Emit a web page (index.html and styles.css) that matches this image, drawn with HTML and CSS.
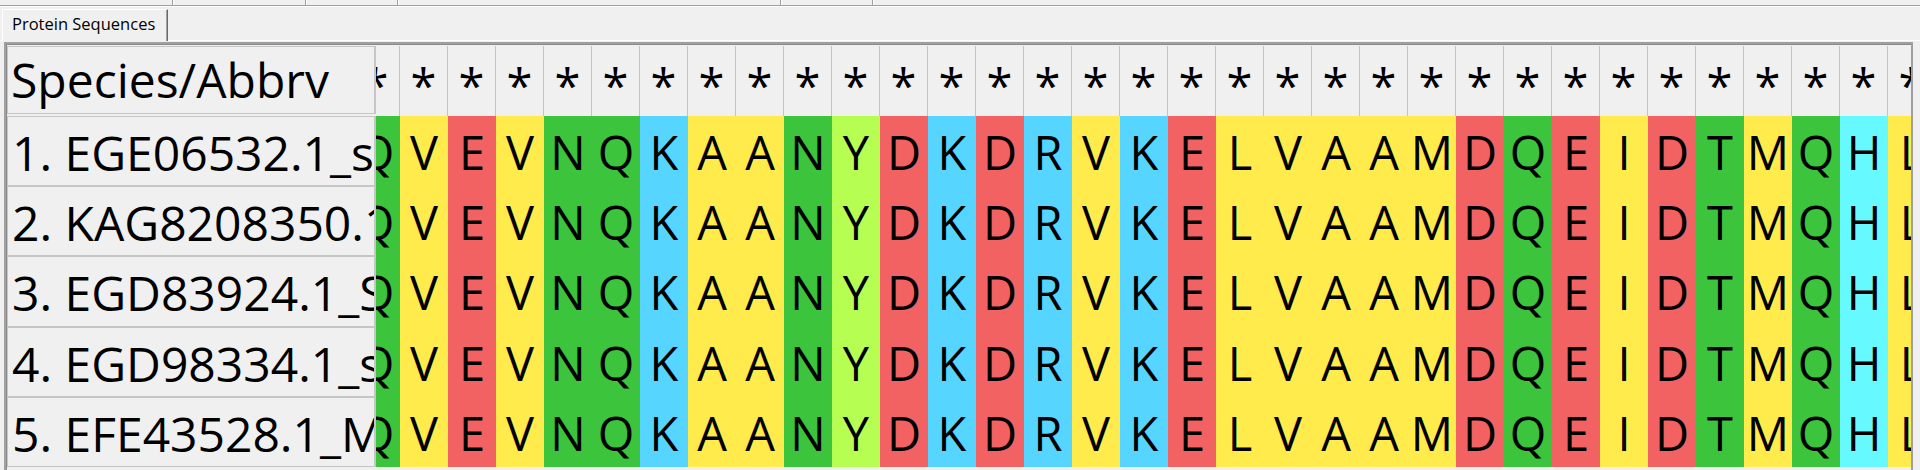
FILE: index.html
```html
<!DOCTYPE html>
<html>
<head>
<meta charset="utf-8">
<link rel="stylesheet" href="styles.css">
</head>
<body>
<div class="topbar">
  <div class="seg w1"></div>
  <div class="seg w2"></div>
  <div class="seg w3"></div>
  <div class="seg w4"></div>
  <div class="seg w5"></div>
  <div class="seg rest"></div>
</div>
<div class="tabs">
  <div class="tab">Protein Sequences</div>
</div>
<div class="panel">
  <div class="frame">
    <div class="names">
      <div class="name head">Species/Abbrv</div>
      <div class="name">1. EGE06532.1_s</div>
      <div class="name">2. KAG8208350.1</div>
      <div class="name">3. EGD83924.1_S</div>
      <div class="name">4. EGD98334.1_s</div>
      <div class="name">5. EFE43528.1_M</div>
    </div>
    <div class="seqs">
      <div class="track">
        <div class="srow head"><span>*</span><span>*</span><span>*</span><span>*</span><span>*</span><span>*</span><span>*</span><span>*</span><span>*</span><span>*</span><span>*</span><span>*</span><span>*</span><span>*</span><span>*</span><span>*</span><span>*</span><span>*</span><span>*</span><span>*</span><span>*</span><span>*</span><span>*</span><span>*</span><span>*</span><span>*</span><span>*</span><span>*</span><span>*</span><span>*</span><span>*</span><span>*</span><span>*</span></div>
        <div class="srow"><span class="g">Q</span><span class="y">V</span><span class="r">E</span><span class="y">V</span><span class="g">N</span><span class="g">Q</span><span class="b">K</span><span class="y">A</span><span class="y">A</span><span class="g">N</span><span class="lg">Y</span><span class="r">D</span><span class="b">K</span><span class="r">D</span><span class="b">R</span><span class="y">V</span><span class="b">K</span><span class="r">E</span><span class="y">L</span><span class="y">V</span><span class="y">A</span><span class="y">A</span><span class="y">M</span><span class="r">D</span><span class="g">Q</span><span class="r">E</span><span class="y">I</span><span class="r">D</span><span class="g">T</span><span class="y">M</span><span class="g">Q</span><span class="c">H</span><span class="y">L</span></div>
        <div class="srow"><span class="g">Q</span><span class="y">V</span><span class="r">E</span><span class="y">V</span><span class="g">N</span><span class="g">Q</span><span class="b">K</span><span class="y">A</span><span class="y">A</span><span class="g">N</span><span class="lg">Y</span><span class="r">D</span><span class="b">K</span><span class="r">D</span><span class="b">R</span><span class="y">V</span><span class="b">K</span><span class="r">E</span><span class="y">L</span><span class="y">V</span><span class="y">A</span><span class="y">A</span><span class="y">M</span><span class="r">D</span><span class="g">Q</span><span class="r">E</span><span class="y">I</span><span class="r">D</span><span class="g">T</span><span class="y">M</span><span class="g">Q</span><span class="c">H</span><span class="y">L</span></div>
        <div class="srow"><span class="g">Q</span><span class="y">V</span><span class="r">E</span><span class="y">V</span><span class="g">N</span><span class="g">Q</span><span class="b">K</span><span class="y">A</span><span class="y">A</span><span class="g">N</span><span class="lg">Y</span><span class="r">D</span><span class="b">K</span><span class="r">D</span><span class="b">R</span><span class="y">V</span><span class="b">K</span><span class="r">E</span><span class="y">L</span><span class="y">V</span><span class="y">A</span><span class="y">A</span><span class="y">M</span><span class="r">D</span><span class="g">Q</span><span class="r">E</span><span class="y">I</span><span class="r">D</span><span class="g">T</span><span class="y">M</span><span class="g">Q</span><span class="c">H</span><span class="y">L</span></div>
        <div class="srow"><span class="g">Q</span><span class="y">V</span><span class="r">E</span><span class="y">V</span><span class="g">N</span><span class="g">Q</span><span class="b">K</span><span class="y">A</span><span class="y">A</span><span class="g">N</span><span class="lg">Y</span><span class="r">D</span><span class="b">K</span><span class="r">D</span><span class="b">R</span><span class="y">V</span><span class="b">K</span><span class="r">E</span><span class="y">L</span><span class="y">V</span><span class="y">A</span><span class="y">A</span><span class="y">M</span><span class="r">D</span><span class="g">Q</span><span class="r">E</span><span class="y">I</span><span class="r">D</span><span class="g">T</span><span class="y">M</span><span class="g">Q</span><span class="c">H</span><span class="y">L</span></div>
        <div class="srow"><span class="g">Q</span><span class="y">V</span><span class="r">E</span><span class="y">V</span><span class="g">N</span><span class="g">Q</span><span class="b">K</span><span class="y">A</span><span class="y">A</span><span class="g">N</span><span class="lg">Y</span><span class="r">D</span><span class="b">K</span><span class="r">D</span><span class="b">R</span><span class="y">V</span><span class="b">K</span><span class="r">E</span><span class="y">L</span><span class="y">V</span><span class="y">A</span><span class="y">A</span><span class="y">M</span><span class="r">D</span><span class="g">Q</span><span class="r">E</span><span class="y">I</span><span class="r">D</span><span class="g">T</span><span class="y">M</span><span class="g">Q</span><span class="c">H</span><span class="y">L</span></div>
      </div>
    </div>
  </div>
</div>
</body>
</html>
```
FILE: styles.css
```css
html, body {
  margin: 0;
  padding: 0;
  background: #f0f0f0;
  width: 1920px;
  height: 470px;
  overflow: hidden;
  font-family: "Open Sans", "Noto Sans", sans-serif;
  color: #000;
}

.topbar {
  display: flex;
  height: 5px;
  border-bottom: 1px solid #a0a0a0;
  box-shadow: 0 1px 0 #ffffff;
}
.seg {
  height: 5px;
  border-right: 1px solid #a0a0a0;
  box-shadow: 1px 0 0 #ffffff;
  box-sizing: border-box;
}
.w1 { width: 173px; }
.w2 { width: 133px; }
.w3 { width: 92px; }
.w4 { width: 383px; }
.w5 { width: 92px; }
.rest { flex: 1; border-right: none; }

.tabs {
  display: flex;
  padding-top: 3px;
  padding-left: 2px;
  position: relative;
  z-index: 1;
  margin-bottom: -1px;
}
.tab {
  width: 166px;
  height: 32px;
  box-sizing: border-box;
  background: #f0f0f0;
  border-top: 1px solid #ffffff;
  border-left: 1px solid #ffffff;
  border-right: 1px solid #696969;
  box-shadow: inset -1px 0 0 #a0a0a0;
  padding-left: 9px;
  padding-top: 3px;
  font-size: 16.5px;
  line-height: 22px;
  white-space: nowrap;
  color: #000;
}

.panel {
  border-top: 1px solid #ffffff;
  padding-top: 1px;
  padding-left: 4px;
  padding-right: 7px;
}
.frame {
  display: flex;
  height: 440px;
  border-top: 2px solid #a0a0a0;
  border-left: 2px solid #a0a0a0;
  border-right: 2px solid #a0a0a0;
  box-shadow: inset 1px 1px 0 #8a8a8a;
  overflow: hidden;
}

.names {
  width: 370px;
  flex: none;
  padding-top: 2px;
  padding-left: 1px;
  box-sizing: border-box;
}
.name {
  height: 70.2px;
  box-sizing: border-box;
  border: 1px solid #c6c6c6;
  border-right-width: 2px;
  background: #f0f0f0;
  white-space: nowrap;
  overflow: hidden;
  font-size: 48px;
  line-height: 70px;
  padding-left: 4px;
  padding-top: 1px;
}
.name.head {
  height: 68px;
  margin-bottom: 2px;
  font-size: 48px;
  line-height: 64px;
  padding-left: 3px;
}

.seqs {
  flex: 1;
  overflow: hidden;
  padding-top: 2px;
}
.track {
  margin-left: -24px;
  width: 1600px;
}
.srow {
  display: flex;
  height: 70.2px;
  font-size: 47px;
  line-height: 70px;
}
.srow span {
  width: 48px;
  flex: none;
  text-align: center;
  padding-top: 1px;
  box-sizing: border-box;
}
.srow.head {
  height: 70px;
}
.srow.head span {
  border-right: 1px solid #c4c4c4;
  background: #f0f0f0;
  line-height: 76px;
}

.g  { background: #3cc43c; }
.y  { background: #ffeb4b; }
.r  { background: #f36262; }
.b  { background: #55d5ff; }
.c  { background: #66f9ff; }
.lg { background: #b6ff52; }
```
